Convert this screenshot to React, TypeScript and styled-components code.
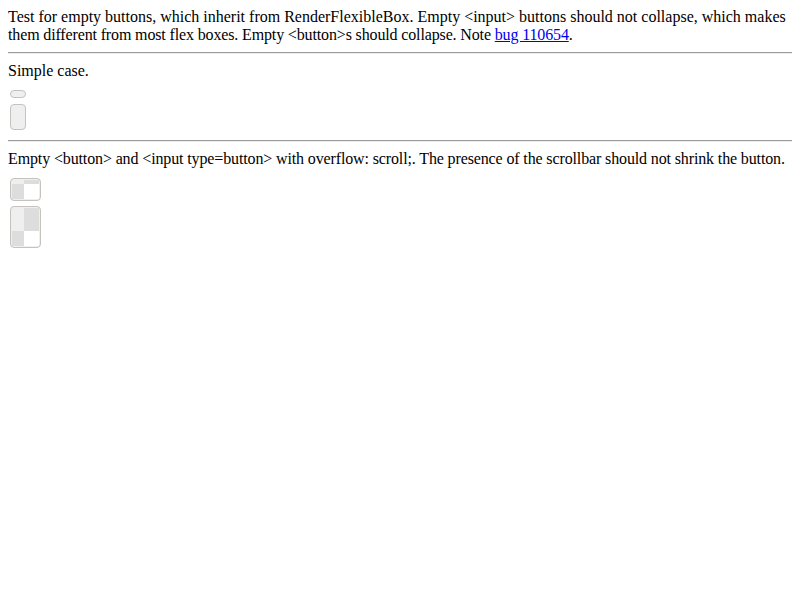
import React from "react";
import styled, { createGlobalStyle } from "styled-components";

const Global = createGlobalStyle`
  html, body { background: #fff; }
  body {
    margin: 8px;
    font-family: "Liberation Serif", "Times New Roman", serif;
    font-size: 16px;
    color: #000;
  }
`;

const Page = styled.div`
  display: flex;
  flex-direction: column;
  align-items: flex-start;
`;

const Text = styled.div<{ $spacing?: number }>`
  line-height: 18px;
  align-self: stretch;
  white-space: nowrap;
  letter-spacing: ${(p) => p.$spacing ?? 0}px;
`;

const Tight = styled.span<{ $spacing: number }>`
  letter-spacing: ${(p) => p.$spacing}px;
`;

const Link = styled.a`
  color: #0000ee;
  text-decoration: underline;
`;

const Rule = styled.hr<{ $mt?: number }>`
  align-self: stretch;
  margin: ${(p) => p.$mt ?? 8}px 0 8px;
  border: none;
  border-top: 1px solid #9a9a9a;
  border-bottom: 1px solid #eeeeee;
  height: 0;
`;

const EmptyButton = styled.div<{ $h: number; $mt: number }>`
  box-sizing: border-box;
  width: 16px;
  height: ${(p) => p.$h}px;
  margin: ${(p) => p.$mt}px 0 0 2px;
  background: #efefef;
  border: 1px solid #c6c3bf;
  border-radius: 4px;
`;

const ScrollButton = styled.div<{ $top: number; $mt: number }>`
  box-sizing: border-box;
  width: 31px;
  margin: ${(p) => p.$mt}px 0 0 2px;
  padding: 1px;
  background: #efefef;
  border: 1px solid #c6c3bf;
  border-radius: 4px;
  display: grid;
  grid-template-columns: 12px 15px;
  grid-template-rows: ${(p) => p.$top}px 15px;
  overflow: hidden;
`;

const Cell = styled.div<{ $c: string }>`
  background: ${(p) => p.$c};
`;

function Scroller({ top, mt }: { top: number; mt: number }) {
  return (
    <ScrollButton $top={top} $mt={mt}>
      <Cell $c="#efefef" />
      <Cell $c="#dddddd" />
      <Cell $c="#dddddd" />
      <Cell $c="#ffffff" />
    </ScrollButton>
  );
}

export default function App() {
  return (
    <>
      <Global />
      <Page>
        <Text>
          Test for empty buttons, which inherit from RenderFlexibleBox. Empty
          &lt;input&gt; buttons should not collapse, which makes
          <br />
          <Tight $spacing={-0.14}>
            them different from most flex boxes. Empty &lt;button&gt;s should
            collapse. Note <Link href="#">bug 110654</Link>.
          </Tight>
        </Text>
        <Rule />
        <Text>Simple case.</Text>
        <EmptyButton $h={8} $mt={10} />
        <EmptyButton $h={26} $mt={6} />
        <Rule $mt={10} />
        <Text $spacing={-0.13}>
          Empty &lt;button&gt; and &lt;input type=button&gt; with overflow:
          scroll;. The presence of the scrollbar should not shrink the button.
        </Text>
        <Scroller top={4} mt={10} />
        <Scroller top={23} mt={5} />
      </Page>
    </>
  );
}
